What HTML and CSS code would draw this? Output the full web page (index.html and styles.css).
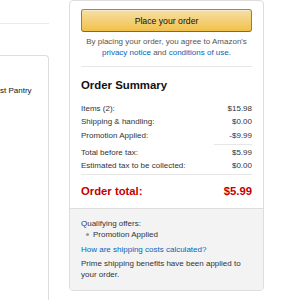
FILE: index.html
```html
<!DOCTYPE html>
<html>
<head>
<meta charset="utf-8">
<link rel="stylesheet" href="styles.css">
</head>
<body>
<div class="page">
  <div class="left">
    <div class="left-top"></div>
    <div class="left-box">
      <p class="pantry">st Pantry</p>
    </div>
  </div>
  <aside class="card">
    <div class="card-main">
      <button class="place">Place your order</button>
      <p class="agree">By placing your order, you agree to Amazon's <a href="#">privacy notice</a> and <a href="#">conditions of use</a>.</p>
      <div class="rule"></div>
      <h2 class="title">Order Summary</h2>
      <div class="group group-first">
        <div class="row"><span>Items (2):</span><span>$15.98</span></div>
        <div class="row"><span>Shipping &amp; handling:</span><span>$0.00</span></div>
        <div class="row"><span>Promotion Applied:</span><span>-$9.99</span></div>
      </div>
      <div class="short-rule"></div>
      <div class="group">
        <div class="row"><span>Total before tax:</span><span>$5.99</span></div>
        <div class="row"><span>Estimated tax to be collected:</span><span>$0.00</span></div>
      </div>
      <div class="rule rule-total"></div>
      <div class="total"><span>Order total:</span><span>$5.99</span></div>
    </div>
    <div class="card-foot">
      <p class="offers">Qualifying offers:</p>
      <ul class="offer-list"><li>Promotion Applied</li></ul>
      <a href="#" class="ship-link">How are shipping costs calculated?</a>
      <p class="prime">Prime shipping benefits have been applied to your order.</p>
    </div>
  </aside>
</div>
</body>
</html>
```

FILE: styles.css
```css
* { box-sizing: border-box; }
html, body { margin: 0; padding: 0; background: #fff; }
body {
  font-family: "Liberation Sans", Arial, sans-serif;
  font-size: 8px;
  color: #111;
  overflow: hidden;
}
a { color: #0066c0; text-decoration: none; }
p { margin: 0; }

.page {
  display: flex;
  align-items: flex-start;
  gap: 20px;
}

.left { width: 49px; flex: none; }
.left-top {
  height: 24px;
  border-bottom: 1px solid #eaeaea;
}
.left-box {
  margin-top: 31px;
  height: 260px;
  border: 1px solid #dddddd;
  border-left: none;
  border-bottom: none;
  border-top-right-radius: 4px;
  padding-top: 29px;
}
.pantry {
  line-height: 11px;
  font-size: 8px;
  color: #111;
}

.card {
  width: 195px;
  flex: none;
  border: 1px solid #dddddd;
  border-radius: 4px;
  overflow: hidden;
}
.card-main {
  padding: 8px 11px 10px 11px;
}
.place {
  display: block;
  width: 100%;
  height: 23px;
  border: 1px solid #a88734;
  border-color: #a88734 #9c7e31 #846a29;
  border-radius: 3px;
  background: linear-gradient(to bottom, #f7dfa5, #f0c14b);
  box-shadow: inset 0 1px 0 rgba(255,255,255,0.4);
  font-family: "Liberation Sans", Arial, sans-serif;
  font-size: 8.7px;
  color: #111;
  padding: 0;
}
.agree {
  margin-top: 4px;
  text-align: center;
  line-height: 11px;
  color: #555;
}
.rule {
  height: 1px;
  background: #e7e7e7;
  margin-top: 8px;
}
.title {
  margin: 11px 0 0 0;
  font-size: 11.4px;
  line-height: 14px;
  font-weight: bold;
  color: #111;
}
.group { display: flex; flex-direction: column; }
.group-first { margin-top: 10px; }
.row {
  display: flex;
  justify-content: space-between;
  line-height: 13.3px;
  color: #333;
}
.short-rule {
  height: 1px;
  width: 38px;
  background: #e7e7e7;
  margin: 2px 0 1px auto;
}
.rule-total { margin-top: 2px; }
.total {
  display: flex;
  justify-content: space-between;
  margin-top: 9px;
  font-size: 11.3px;
  line-height: 14px;
  font-weight: bold;
  color: #c40000;
}
.card-foot {
  background: #f3f3f3;
  border-top: 1px solid #dddddd;
  padding: 9px 11px 10px 11px;
  line-height: 11px;
  color: #333;
}
.offer-list {
  margin: 0;
  padding: 0 0 0 12px;
  list-style: none;
}
.offer-list li {
  position: relative;
}
.offer-list li::before {
  content: "";
  position: absolute;
  left: -7px;
  top: 4px;
  width: 3px;
  height: 3px;
  border-radius: 50%;
  background: #999;
}
.ship-link {
  display: block;
  margin-top: 4px;
}
.prime {
  margin-top: 3px;
}
```
